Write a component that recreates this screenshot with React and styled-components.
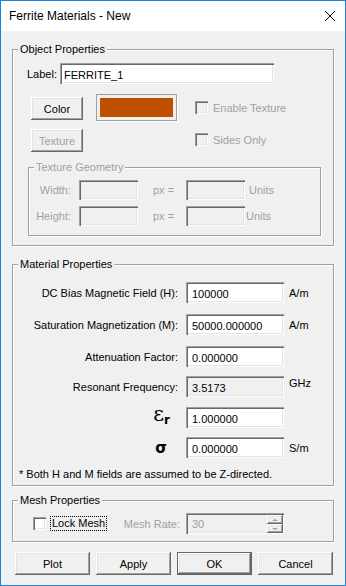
import styled, { createGlobalStyle } from "styled-components";

const GlobalStyle = createGlobalStyle`
  html, body {
    margin: 0;
    padding: 0;
    background: #ffffff;
  }
  body {
    font-family: "Liberation Sans", Arial, sans-serif;
    font-size: 11px;
    color: #000000;
  }
`;

const sunken = `
  box-shadow: inset 1px 1px 0 #a0a0a0, inset 2px 2px 0 #696969,
    inset -1px -1px 0 #ffffff, inset -2px -2px 0 #e3e3e3;
`;

const raised = `
  box-shadow: inset -1px -1px 0 #696969, inset 1px 1px 0 #ffffff,
    inset -2px -2px 0 #a0a0a0, inset 2px 2px 0 #e3e3e3;
`;

const materialRows = [
  { label: "DC Bias Magnetic Field (H):", value: "100000", unit: "A/m", top: 17 },
  { label: "Saturation Magnetization (M):", value: "50000.000000", unit: "A/m", top: 11 },
  { label: "Attenuation Factor:", value: "0.000000", top: 11 },
  { label: "Resonant Frequency:", value: "3.5173", unit: "GHz", top: 9, readOnly: true },
  { symbol: "eps", value: "1.000000", top: 10 },
  { symbol: "sigma", value: "0.000000", unit: "S/m", top: 9 },
];

function CloseIcon() {
  return (
    <svg width="12" height="12" viewBox="0 0 12 12">
      <path d="M1 1 L11 11 M11 1 L1 11" stroke="#000" strokeWidth="1" fill="none" />
    </svg>
  );
}

function App() {
  return (
    <>
      <GlobalStyle />
      <Window>
        <TitleBar>
          <Title>Ferrite Materials - New</Title>
          <CloseIcon />
        </TitleBar>
        <Body>
          <Group $top={18} $w={322} $h={197}>
            <Legend>Object Properties</Legend>
            <LabelRow>
              <RowText $w={33}>Label:</RowText>
              <Field $w={214} $h={21} defaultValue="FERRITE_1" />
            </LabelRow>
            <ColorArea>
              <ButtonColumn>
                <Button $w={52}>Color</Button>
                <Button $w={52} disabled>
                  Texture
                </Button>
              </ButtonColumn>
              <Swatch>
                <SwatchFill />
              </Swatch>
              <CheckColumn>
                <CheckRow $disabled>
                  <CheckBox $disabled />
                  Enable Texture
                </CheckRow>
                <CheckRow $disabled>
                  <CheckBox $disabled />
                  Sides Only
                </CheckRow>
              </CheckColumn>
            </ColorArea>
            <Group $top={15} $left={15} $w={293} $h={69}>
              <Legend $disabled>Texture Geometry</Legend>
              <GeoRow $top={12}>
                <GeoLabel>Width:</GeoLabel>
                <Field $w={59} $h={20} disabled />
                <PxLabel>px =</PxLabel>
                <Field $w={59} $h={20} disabled />
                <GeoUnit $gap={4}>Units</GeoUnit>
              </GeoRow>
              <GeoRow $top={6}>
                <GeoLabel>Height:</GeoLabel>
                <Field $w={59} $h={20} disabled />
                <PxLabel>px =</PxLabel>
                <Field $w={59} $h={20} disabled />
                <GeoUnit $gap={1}>Units</GeoUnit>
              </GeoRow>
            </Group>
          </Group>

          <Group $top={18} $w={322} $h={222}>
            <Legend>Material Properties</Legend>
            {materialRows.map((row, i) => (
              <PropRow key={i} $top={row.top}>
                <PropLabel $pad={row.symbol === "eps" ? 8 : row.symbol === "sigma" ? 11 : 0}>
                  {row.symbol === "eps" ? (
                    <Epsilon>
                      ε<sub>r</sub>
                    </Epsilon>
                  ) : row.symbol === "sigma" ? (
                    <Sigma>σ</Sigma>
                  ) : (
                    row.label
                  )}
                </PropLabel>
                <Field $w={98} $h={21} $pad={6} $grey={row.readOnly} readOnly={row.readOnly} defaultValue={row.value} />
                {row.unit && <Unit $raise={row.readOnly}>{row.unit}</Unit>}
              </PropRow>
            ))}
            <Note>* Both H and M fields are assumed to be Z-directed.</Note>
          </Group>

          <Group $top={14} $w={322} $h={42}>
            <Legend>Mesh Properties</Legend>
            <MeshRow>
              <CheckBox />
              <FocusLabel>Lock Mesh</FocusLabel>
              <MeshLabel>Mesh Rate:</MeshLabel>
              <SpinField>
                <SpinValue>30</SpinValue>
                <SpinColumn>
                  <SpinButton>
                    <Arrow $up />
                  </SpinButton>
                  <SpinButton>
                    <Arrow />
                  </SpinButton>
                </SpinColumn>
              </SpinField>
            </MeshRow>
          </Group>

          <ButtonRow>
            <Button $w={75} $h={23}>Plot</Button>
            <Button $w={75} $h={23}>Apply</Button>
            <Button $w={75} $h={23} $default>OK</Button>
            <Button $w={75} $h={23}>Cancel</Button>
          </ButtonRow>
        </Body>
      </Window>
    </>
  );
}

const Window = styled.div`
  width: 346px;
  height: 586px;
  box-sizing: border-box;
  border: 1px solid #1883d7;
  background: #f0f0f0;
  display: flex;
  flex-direction: column;
  overflow: hidden;
`;

const TitleBar = styled.div`
  height: 30px;
  flex-shrink: 0;
  background: #ffffff;
  display: flex;
  align-items: center;
  justify-content: space-between;
  padding: 0 9px 0 8px;
`;

const Title = styled.span`
  font-size: 12px;
  color: #000000;
`;

const Body = styled.div`
  display: flex;
  flex-direction: column;
  padding: 0 11px;
`;

const Group = styled.div`
  position: relative;
  box-sizing: border-box;
  margin-top: ${(p) => p.$top}px;
  margin-left: ${(p) => p.$left || 0}px;
  width: ${(p) => p.$w}px;
  height: ${(p) => p.$h}px;
  flex-shrink: 0;
  border: 1px solid #a0a0a0;
  box-shadow: inset 1px 1px 0 #ffffff, 1px 1px 0 #ffffff;
  display: flex;
  flex-direction: column;
`;

const Legend = styled.span`
  position: absolute;
  top: -8px;
  left: 5px;
  padding: 0 2px;
  line-height: 14px;
  font-size: 11px;
  background: #f0f0f0;
  color: ${(p) => (p.$disabled ? "#a0a0a0" : "#000000")};
`;

const LabelRow = styled.div`
  display: flex;
  align-items: center;
  margin-top: 13px;
  padding-left: 14px;
`;

const RowText = styled.span`
  width: ${(p) => p.$w}px;
`;

const Field = styled.input`
  box-sizing: border-box;
  width: ${(p) => p.$w}px;
  height: ${(p) => p.$h}px;
  flex-shrink: 0;
  margin: 0;
  border: none;
  outline: none;
  padding: 2px 2px 0 ${(p) => p.$pad || 4}px;
  font-family: "Liberation Sans", Arial, sans-serif;
  font-size: 11px;
  color: #000000;
  background: ${(p) => (p.$grey || p.disabled ? "#f0f0f0" : "#ffffff")};
  ${sunken}
`;

const ColorArea = styled.div`
  display: flex;
  align-items: flex-start;
  margin-top: 10px;
  padding-left: 18px;
`;

const ButtonColumn = styled.div`
  display: flex;
  flex-direction: column;
  gap: 9px;
  padding-top: 3px;
`;

const Button = styled.button`
  box-sizing: border-box;
  width: ${(p) => p.$w}px;
  height: ${(p) => p.$h || 23}px;
  margin: 0;
  padding: 0;
  border: none;
  background: #f0f0f0;
  font-family: "Liberation Sans", Arial, sans-serif;
  font-size: 11px;
  color: #000000;
  ${raised}
  ${(p) =>
    p.$default &&
    `box-shadow: inset 0 0 0 1px #646464, inset -2px -2px 0 #696969, inset 2px 2px 0 #ffffff,
      inset -3px -3px 0 #a0a0a0, inset 3px 3px 0 #e3e3e3;`}
  &:disabled {
    color: #a0a0a0;
  }
`;

const Swatch = styled.div`
  box-sizing: border-box;
  width: 81px;
  height: 27px;
  margin-left: 13px;
  padding: 3px;
  border: 1px solid #a0a0a0;
  box-shadow: 1px 1px 0 #ffffff;
`;

const SwatchFill = styled.div`
  width: 100%;
  height: 100%;
  background: #c05000;
`;

const CheckColumn = styled.div`
  display: flex;
  flex-direction: column;
  gap: 19px;
  margin-left: 18px;
  padding-top: 7px;
`;

const CheckRow = styled.div`
  display: flex;
  align-items: center;
  gap: 5px;
  height: 13px;
  color: ${(p) => (p.$disabled ? "#a0a0a0" : "#000000")};
`;

const CheckBox = styled.span`
  box-sizing: border-box;
  width: 13px;
  height: 13px;
  flex-shrink: 0;
  background: ${(p) => (p.$disabled ? "#f0f0f0" : "#ffffff")};
  ${sunken}
`;

const GeoRow = styled.div`
  display: flex;
  align-items: center;
  margin-top: ${(p) => p.$top}px;
`;

const GeoLabel = styled.span`
  width: 42px;
  margin-right: 8px;
  text-align: right;
  color: #a0a0a0;
`;

const PxLabel = styled.span`
  width: 33px;
  margin-left: 15px;
  color: #a0a0a0;
`;

const GeoUnit = styled.span`
  margin-left: ${(p) => p.$gap}px;
  color: #a0a0a0;
`;

const PropRow = styled.div`
  display: flex;
  align-items: center;
  height: 21px;
  margin-top: ${(p) => p.$top}px;
`;

const PropLabel = styled.span`
  box-sizing: border-box;
  width: 165px;
  margin-right: 8px;
  padding-right: ${(p) => p.$pad}px;
  text-align: right;
`;

const Epsilon = styled.span`
  font-family: "DejaVu Serif", serif;
  font-size: 21px;
  line-height: 21px;
  sub {
    font-family: "DejaVu Sans", sans-serif;
    font-weight: bold;
    font-size: 12px;
    vertical-align: -3px;
  }
`;

const Sigma = styled.span`
  font-family: "DejaVu Sans", sans-serif;
  font-weight: bold;
  font-size: 15px;
`;

const Unit = styled.span`
  margin-left: 5px;
  align-self: ${(p) => (p.$raise ? "flex-start" : "center")};
  line-height: ${(p) => (p.$raise ? "14px" : "normal")};
`;

const Note = styled.div`
  margin-top: 10px;
  padding-left: 6px;
`;

const MeshRow = styled.div`
  display: flex;
  align-items: center;
  width: 251px;
  margin-top: 12px;
  padding-left: 20px;
`;

const FocusLabel = styled.span`
  margin-left: 4px;
  padding: 0 1px;
  line-height: 13px;
  border: 1px dotted #000000;
`;

const MeshLabel = styled.span`
  flex: 1;
  text-align: right;
  margin-right: 6px;
  color: #a0a0a0;
`;

const SpinField = styled.div`
  box-sizing: border-box;
  width: 98px;
  height: 21px;
  flex-shrink: 0;
  display: flex;
  align-items: stretch;
  padding: 2px 1px 1px 6px;
  background: #f0f0f0;
  ${sunken}
`;

const SpinValue = styled.span`
  flex: 1;
  display: flex;
  align-items: center;
  font-size: 11px;
  color: #a0a0a0;
`;

const SpinColumn = styled.div`
  width: 16px;
  display: flex;
  flex-direction: column;
`;

const SpinButton = styled.div`
  flex: 1;
  display: flex;
  align-items: center;
  justify-content: center;
  background: #f0f0f0;
  ${raised}
`;

const Arrow = styled.span`
  width: 0;
  height: 0;
  border-left: 3px solid transparent;
  border-right: 3px solid transparent;
  ${(p) => (p.$up ? "border-bottom: 2px solid #a0a0a0;" : "border-top: 2px solid #a0a0a0;")}
`;

const ButtonRow = styled.div`
  display: flex;
  gap: 6px;
  margin-top: 10px;
  padding-left: 3px;
`;

export default App;
